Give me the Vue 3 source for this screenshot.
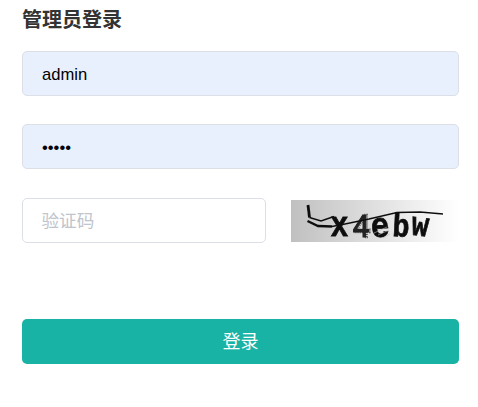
<script setup>
import { ref } from 'vue'

const username = ref('admin')
const password = ref('admin')
const code = ref('')
</script>

<template>
  <form class="login" @submit.prevent>
    <h1 class="title">管理员登录</h1>
    <input v-model="username" class="field filled" type="text" autocomplete="off" />
    <input v-model="password" class="field filled" type="password" autocomplete="off" />
    <div class="row">
      <input v-model="code" class="field code" type="text" placeholder="验证码" />
      <svg class="captcha" width="168" height="42" viewBox="0 0 168 42">
        <defs>
          <linearGradient id="fade" x1="0" x2="1" y1="0" y2="0">
            <stop offset="0" stop-color="#c0c0c0" />
            <stop offset="1" stop-color="#ffffff" />
          </linearGradient>
          <filter id="soften" x="-5%" y="-5%" width="110%" height="110%">
            <feGaussianBlur stdDeviation="0.45" />
          </filter>
        </defs>
        <rect width="168" height="42" fill="url(#fade)" />
        <g filter="url(#soften)">
          <g class="glyphs">
            <text class="bold" transform="translate(39.5 36) scale(1.15 1.35)" font-size="26">x</text>
            <text class="shadow" transform="translate(62 37) scale(1.15 1.25)" font-size="26">4</text>
            <text class="rough" transform="translate(61 37) scale(1.15 1.25)" font-size="26">4</text>
            <text class="bold" transform="translate(80.5 37.5) rotate(-4) scale(1.15 1.3)" font-size="27">e</text>
            <text class="bold" transform="translate(101 36) rotate(3) scale(1.1 1.25)" font-size="26">b</text>
            <text class="bold" transform="translate(119.5 34.5) rotate(7) scale(1.1 1.3)" font-size="26">w</text>
          </g>
          <path class="scratch" d="M83 33l13-6M87 35l11-5M92 38l7-4" />
          <path class="stroke heavy" d="M17 5L18.5 17.5" />
          <path class="stroke" d="M18.5 17.5L30 21L43 16.5" />
          <path class="stroke thick" d="M16.5 21L27 26L41 26.5" />
          <path class="stroke" d="M41 26.5L54 24L78 19L106 12.5L129 12L152 14" />
        </g>
      </svg>
    </div>
    <button class="submit" type="submit">登录</button>
  </form>
</template>

<style>
body {
  background: #fff;
}
</style>

<style scoped>
.login {
  box-sizing: border-box;
  width: 478px;
  height: 407px;
  padding: 5px 19px 0 22px;
  display: flex;
  flex-direction: column;
  font-family: "Liberation Sans", "Noto Sans CJK SC", sans-serif;
}

.title {
  margin: 0 0 16px;
  height: 30px;
  line-height: 30px;
  font-size: 20px;
  font-weight: 700;
  color: #333;
}

.field {
  box-sizing: border-box;
  width: 437px;
  height: 45px;
  flex: none;
  margin: 0 0 28px;
  padding: 2px 19px 0;
  border: 1px solid #dcdfe6;
  border-radius: 5px;
  outline: none;
  background: #fff;
  color: #000;
  font-family: inherit;
  font-size: 16.6px;
}

.filled {
  background: #e8effd;
}

.row {
  display: flex;
  align-items: center;
  gap: 25px;
  margin: 1px 0 76px;
}

.code {
  width: 244px;
  margin: 0;
  padding: 1px 18.5px 0;
  font-size: 17.6px;
}

.code::placeholder {
  color: #c0c4cc;
  opacity: 1;
}

.captcha {
  display: block;
  overflow: visible;
}

.glyphs {
  font-family: "Liberation Mono", monospace;
  font-weight: 700;
  fill: #111;
}

.bold {
  stroke: #111;
  stroke-width: 0.6;
}

.rough {
  font-weight: 400;
  fill: #222;
  stroke: #222;
  stroke-width: 0.9;
}

.shadow {
  font-weight: 400;
  fill: none;
  stroke: #555;
  stroke-width: 2;
  stroke-dasharray: 0.8 0.8;
}

.scratch {
  fill: none;
  stroke: #bbb;
  stroke-width: 0.6;
}

.stroke {
  fill: none;
  stroke: #111;
  stroke-width: 1.5;
}

.thick {
  stroke-width: 2.4;
}

.heavy {
  stroke-width: 2.8;
}

.submit {
  width: 437px;
  height: 45px;
  padding: 0 0 4px;
  border: 0;
  border-radius: 5px;
  background: #19b3a5;
  color: #fff;
  font-family: inherit;
  font-size: 18px;
}
</style>
